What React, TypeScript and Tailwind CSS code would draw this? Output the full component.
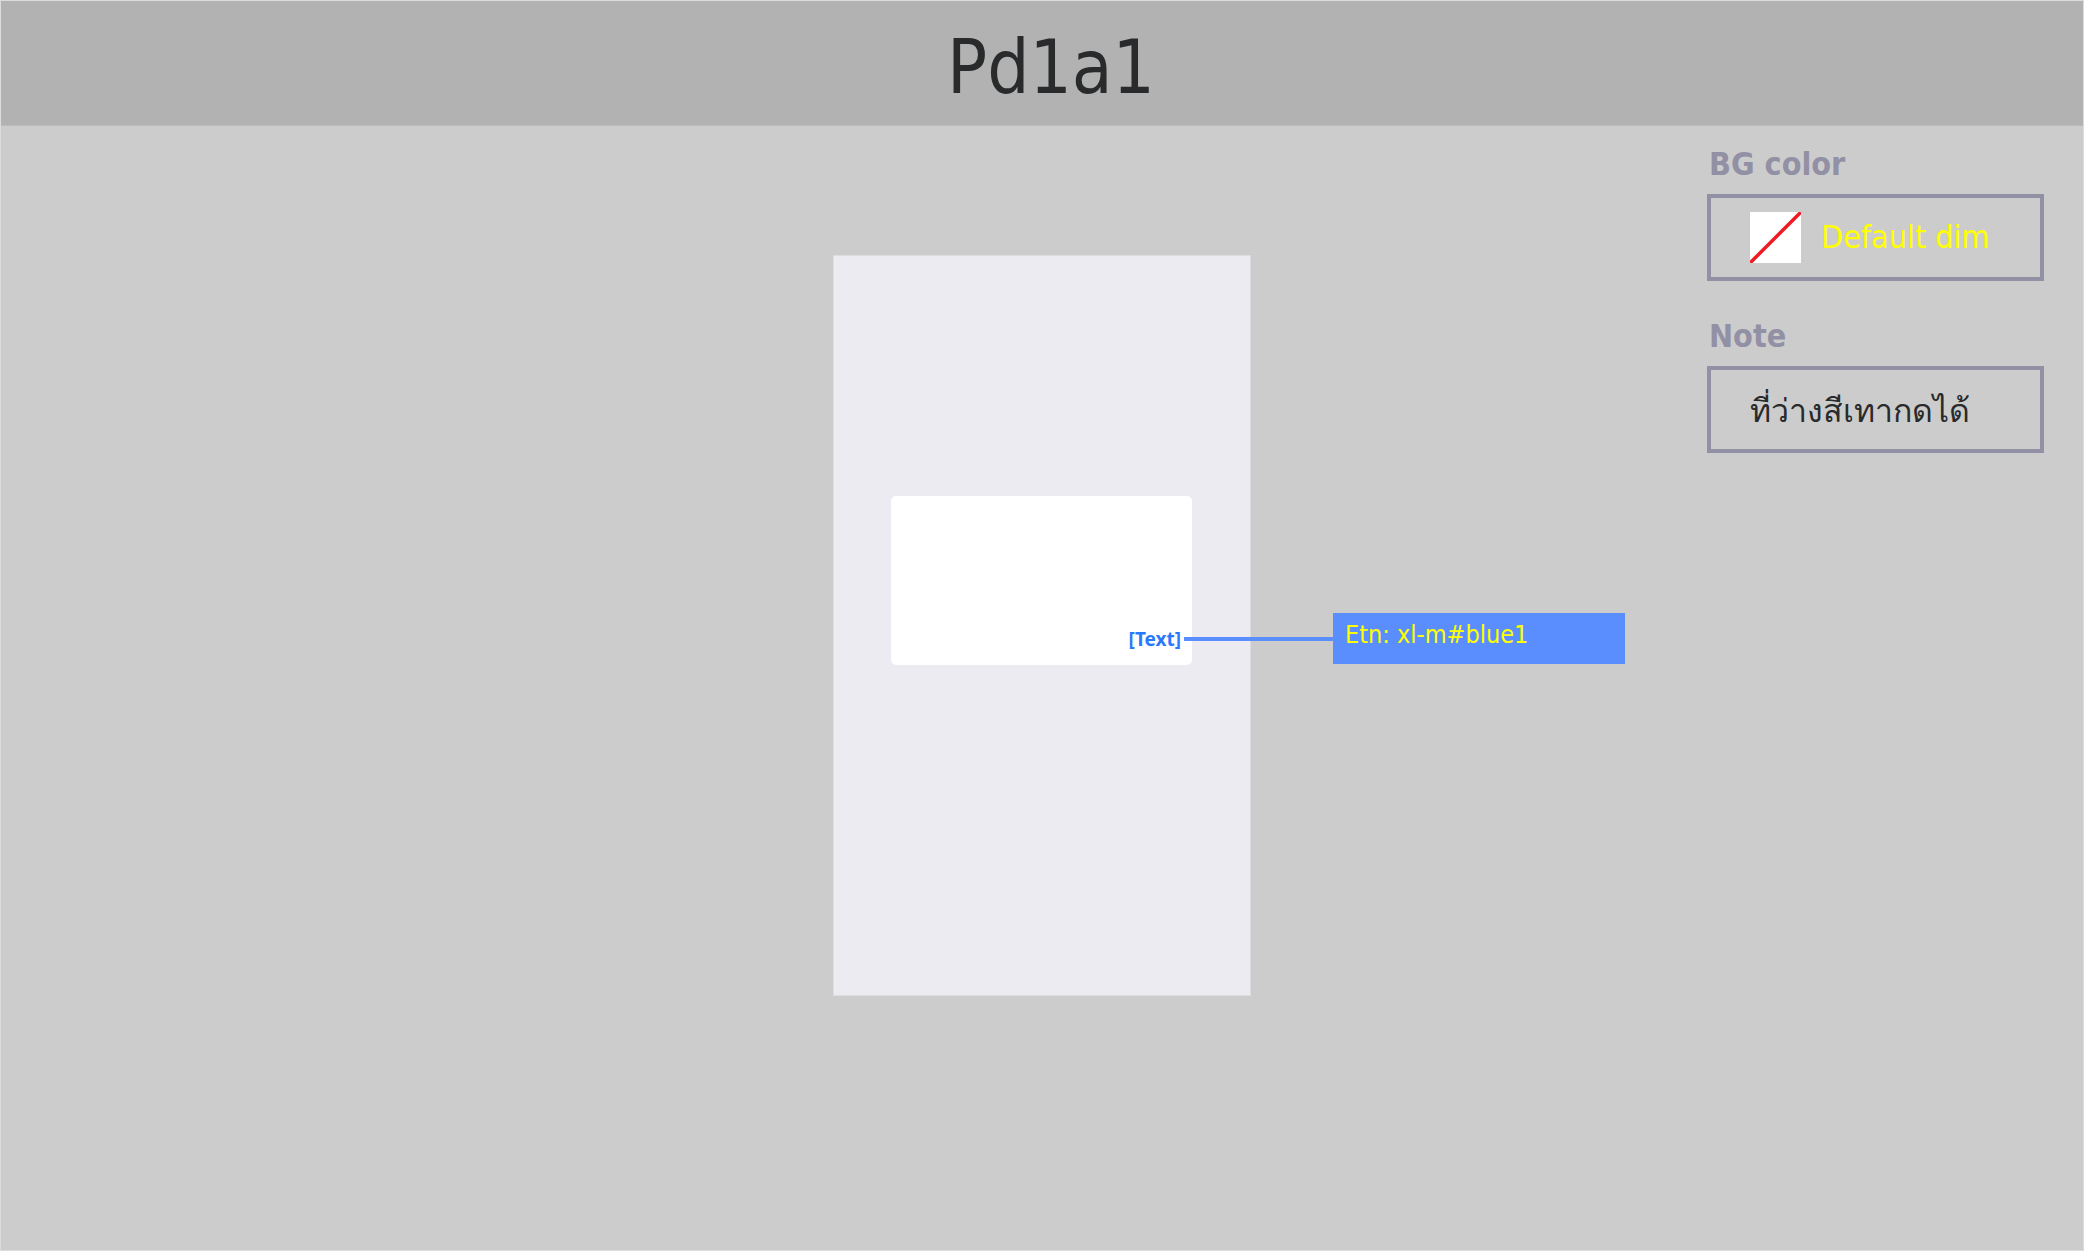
import type { ReactNode } from "react";

function Section({ title, children }: { title: string; children: ReactNode }) {
  return (
    <section>
      <h2 className="ml-[2px] h-[56px] text-[32px] leading-[52px] font-bold text-[#9290a4]">{title}</h2>
      <div className="flex h-[87px] items-center border-4 border-[#9290a4] pl-[39px] whitespace-nowrap">
        {children}
      </div>
    </section>
  );
}

function Preview() {
  return (
    <div className="flex h-[741px] w-[418px] flex-col border border-[#dddde0] bg-[#ebebf1] px-[57px] pt-[240px]">
      <div className="relative flex h-[169px] w-[301px] items-end justify-end rounded-[5px] bg-white pr-[11px] pb-[14px]">
        <button
          type="button"
          className="font-['Noto_Sans',sans-serif] text-[19px] leading-[24px] font-bold text-[#2979ff]"
        >
          [Text]
        </button>
        <div className="absolute top-[117px] left-[293px] flex items-center">
          <span className="h-[4px] w-[149px] bg-[#5a8eff]" />
          <p className="h-[51px] w-[292px] bg-[#5a8eff] pl-[12px] text-[25px] leading-[44px] whitespace-nowrap text-[#ffff00]">
            Etn: xl-m#blue1
          </p>
        </div>
      </div>
    </div>
  );
}

export default function App() {
  return (
    <div className="flex min-h-screen flex-col border border-[#dcdcdc] bg-[#cccccc] font-['DejaVu_Sans_Condensed','DejaVu_Sans',sans-serif]">
      <header className="flex h-[125px] items-center justify-center border-b border-[#bababa] bg-[#b2b2b2] pt-[8px] pl-[18px]">
        <h1 className="text-[74px] leading-[80px] text-[#282a2b]">Pd1a1</h1>
      </header>
      <main className="grid grid-cols-[1fr_auto_1fr]">
        <div />
        <div className="pt-[129px]">
          <Preview />
        </div>
        <aside className="mr-[39px] flex w-[337px] flex-col gap-[29px] justify-self-end pt-[12px]">
          <Section title="BG color">
            <svg width="51" height="51" viewBox="0 0 51 51" className="bg-white" aria-hidden="true">
              <path d="M1.5 49.5 49.5 1.5" stroke="#ed1c24" strokeWidth="3.5" strokeLinecap="round" />
            </svg>
            <span className="ml-[20px] pb-[2px] text-[32px] leading-[40px] text-[#ffff00]">Default dim</span>
          </Section>
          <Section title="Note">
            <span className="pt-[2px] text-[32px] leading-[40px] text-[#282a2b]">ที่ว่างสีเทากดได้</span>
          </Section>
        </aside>
      </main>
    </div>
  );
}
